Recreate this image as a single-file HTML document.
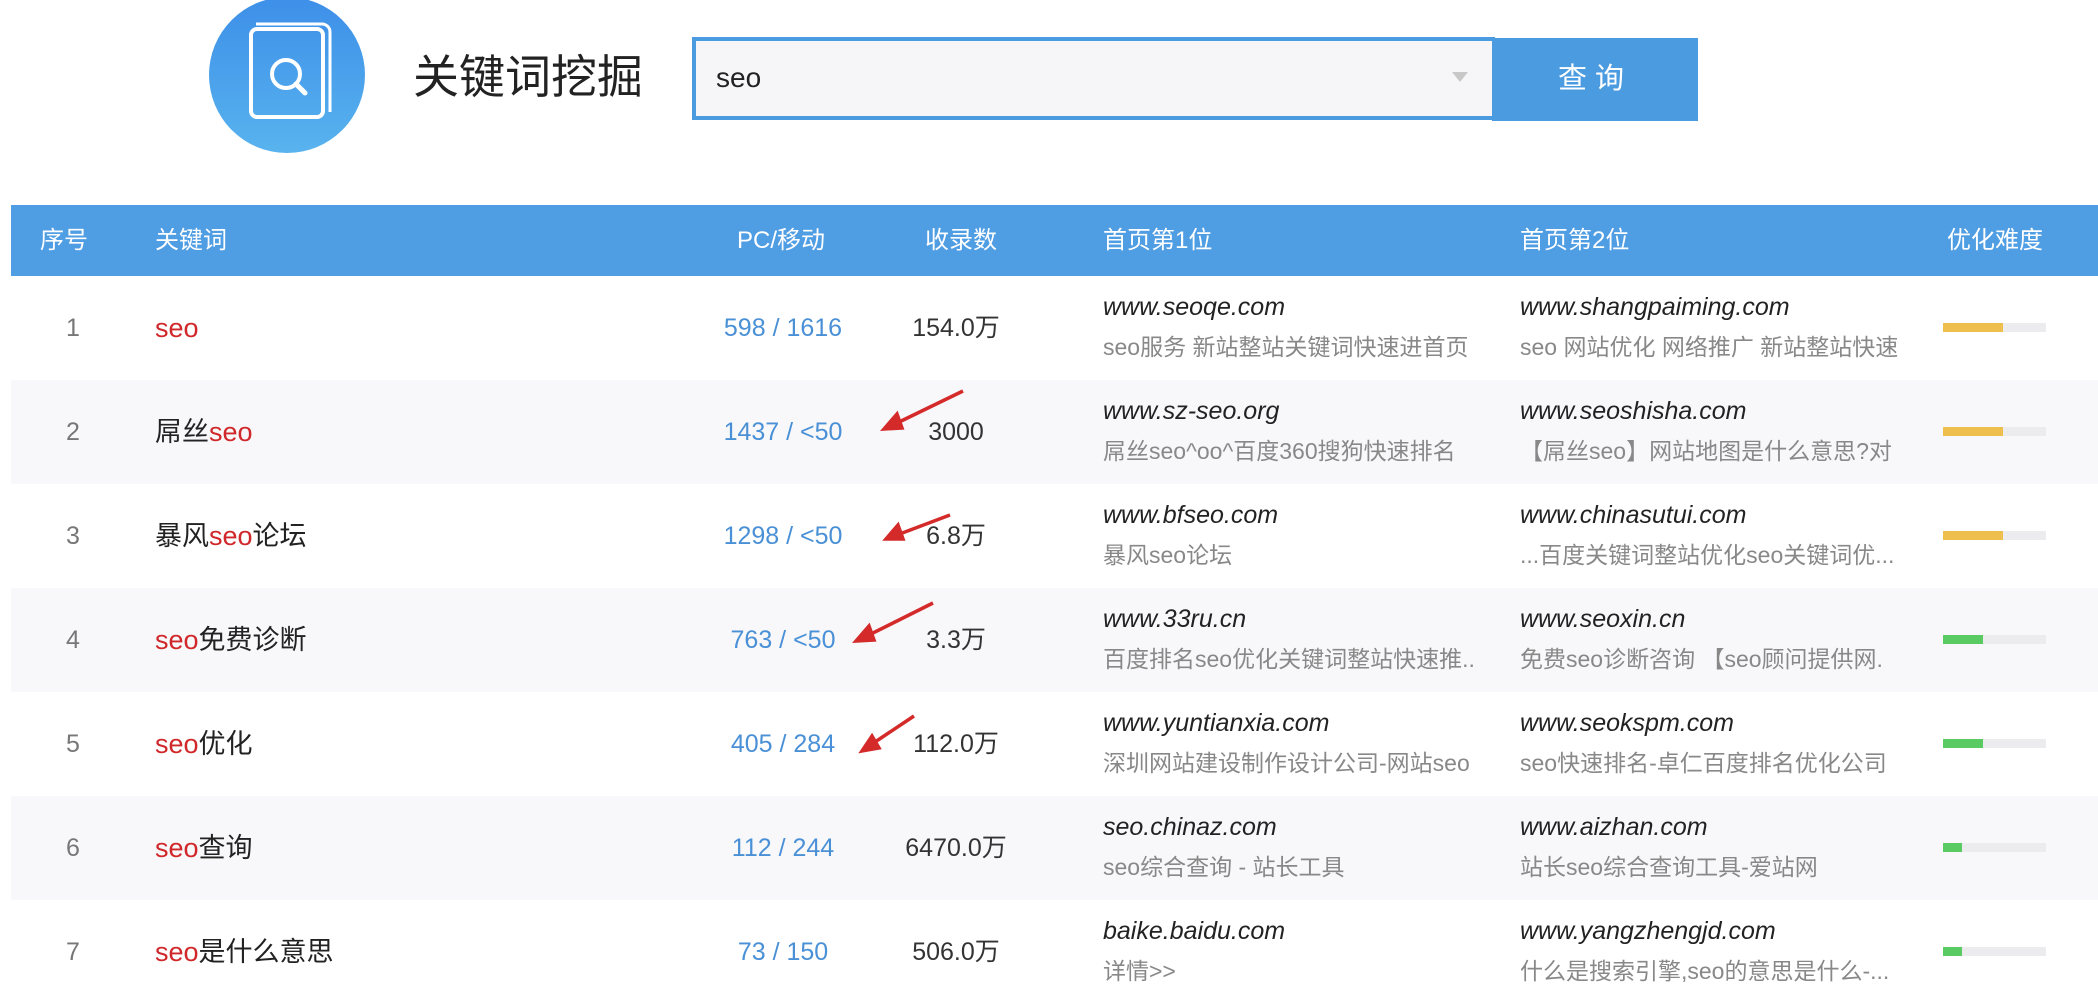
<!DOCTYPE html>
<html><head><meta charset="utf-8"><style>
*{margin:0;padding:0;box-sizing:border-box}
body{width:2098px;height:976px;overflow:hidden;background:#fff;font-family:"Liberation Sans","Noto Sans CJK SC",sans-serif;position:relative}
.abs{position:absolute;white-space:nowrap}
.hdr{position:absolute;left:11px;top:205px;width:2087px;height:71px;background:#4f9de3}
.hdr span{position:absolute;top:0;color:#fff;font-size:24px;line-height:71px}
.row{position:absolute;left:11px;width:2087px;height:104px;overflow:hidden}
.row.alt{background:#f8f8fa}
.row .n,.row .k,.row .p,.row .c{position:absolute;top:0;line-height:104px;height:104px}
.row .n{left:40px;width:44px;text-align:center;font-size:25px;color:#777}
.row .k{left:144px;font-size:27px;color:#222}
.row .k b{font-weight:normal;color:#d0272a}
.row .p{left:672px;width:200px;text-align:center;font-size:25px;color:#4a90d6}
.row .c{left:870px;width:150px;text-align:center;font-size:25px;color:#333}
.row .u{position:absolute;top:14px;line-height:34px;font-size:25px;font-style:italic;color:#222}
.row .d{position:absolute;top:55px;line-height:32px;font-size:23px;color:#888;overflow:hidden;white-space:nowrap}
.bar{position:absolute;left:1932px;top:47px;width:103px;height:9px;background:#ececef}
.bar i{position:absolute;left:0;top:0;height:9px}
</style></head><body>
<svg class="abs" style="left:208px;top:-4px" width="158" height="158" viewBox="0 0 158 158">
<defs><linearGradient id="g" x1="0" y1="0" x2="0" y2="1"><stop offset="0" stop-color="#3d8fe8"/><stop offset="1" stop-color="#58b3ee"/></linearGradient></defs>
<circle cx="79" cy="79" r="78" fill="url(#g)"/>
<rect x="43" y="33" width="72" height="88" rx="6" fill="none" stroke="#fff" stroke-width="4"/>
<path d="M48 28 H114 a8 8 0 0 1 8 8 V116" fill="none" stroke="#fff" stroke-width="3"/>
<circle cx="78" cy="78" r="14" fill="none" stroke="#fff" stroke-width="4"/>
<path d="M88 88 L97 97" stroke="#fff" stroke-width="5" stroke-linecap="round"/>
</svg>
<div class="abs" style="left:413px;top:45px;font-size:46px;color:#222;line-height:64px">关键词挖掘</div>
<div class="abs" style="left:692px;top:37px;width:803px;height:83px;border:4px solid #4a9be0;border-right:none;background:#f6f6f8"></div>
<div class="abs" style="left:716px;top:58px;font-size:28px;color:#222;line-height:40px">seo</div>
<div class="abs" style="left:1452px;top:72px;width:0;height:0;border-left:8px solid transparent;border-right:8px solid transparent;border-top:10px solid #c8c8c8"></div>
<div class="abs" style="left:1492px;top:38px;width:206px;height:83px;background:#4a9be0;color:#fff;font-size:29px;text-align:center;line-height:83px;letter-spacing:8px">查询</div>

<div class="hdr">
<span style="left:29px">序号</span><span style="left:144px">关键词</span><span style="left:726px">PC/移动</span><span style="left:914px">收录数</span><span style="left:1092px">首页第1位</span><span style="left:1509px">首页第2位</span><span style="left:1936px">优化难度</span>
</div>

<div class="row" style="top:276px"><div class="n">1</div><div class="k"><b>seo</b></div><div class="p">598 / 1616</div><div class="c">154.0万</div>
<div class="u" style="left:1092px">www.seoqe.com</div><div class="d" style="left:1092px;width:400px">seo服务 新站整站关键词快速进首页</div>
<div class="u" style="left:1509px">www.shangpaiming.com</div><div class="d" style="left:1509px;width:400px">seo 网站优化 网络推广 新站整站快速</div>
<div class="bar"><i style="width:60px;background:#efbf4e"></i></div></div>

<div class="row alt" style="top:380px"><div class="n">2</div><div class="k">屌丝<b>seo</b></div><div class="p">1437 / &lt;50</div><div class="c">3000</div>
<div class="u" style="left:1092px">www.sz-seo.org</div><div class="d" style="left:1092px;width:400px">屌丝seo^oo^百度360搜狗快速排名</div>
<div class="u" style="left:1509px">www.seoshisha.com</div><div class="d" style="left:1509px;width:400px">【屌丝seo】网站地图是什么意思?对</div>
<div class="bar"><i style="width:60px;background:#efbf4e"></i></div></div>

<div class="row" style="top:484px"><div class="n">3</div><div class="k">暴风<b>seo</b>论坛</div><div class="p">1298 / &lt;50</div><div class="c">6.8万</div>
<div class="u" style="left:1092px">www.bfseo.com</div><div class="d" style="left:1092px;width:400px">暴风seo论坛</div>
<div class="u" style="left:1509px">www.chinasutui.com</div><div class="d" style="left:1509px;width:400px">...百度关键词整站优化seo关键词优...</div>
<div class="bar"><i style="width:60px;background:#efbf4e"></i></div></div>

<div class="row alt" style="top:588px"><div class="n">4</div><div class="k"><b>seo</b>免费诊断</div><div class="p">763 / &lt;50</div><div class="c">3.3万</div>
<div class="u" style="left:1092px">www.33ru.cn</div><div class="d" style="left:1092px;width:400px">百度排名seo优化关键词整站快速推..</div>
<div class="u" style="left:1509px">www.seoxin.cn</div><div class="d" style="left:1509px;width:400px">免费seo诊断咨询 【seo顾问提供网.</div>
<div class="bar"><i style="width:40px;background:#5acb63"></i></div></div>

<div class="row" style="top:692px"><div class="n">5</div><div class="k"><b>seo</b>优化</div><div class="p">405 / 284</div><div class="c">112.0万</div>
<div class="u" style="left:1092px">www.yuntianxia.com</div><div class="d" style="left:1092px;width:400px">深圳网站建设制作设计公司-网站seo</div>
<div class="u" style="left:1509px">www.seokspm.com</div><div class="d" style="left:1509px;width:400px">seo快速排名-卓仁百度排名优化公司</div>
<div class="bar"><i style="width:40px;background:#5acb63"></i></div></div>

<div class="row alt" style="top:796px"><div class="n">6</div><div class="k"><b>seo</b>查询</div><div class="p">112 / 244</div><div class="c">6470.0万</div>
<div class="u" style="left:1092px">seo.chinaz.com</div><div class="d" style="left:1092px;width:400px">seo综合查询 - 站长工具</div>
<div class="u" style="left:1509px">www.aizhan.com</div><div class="d" style="left:1509px;width:400px">站长seo综合查询工具-爱站网</div>
<div class="bar"><i style="width:19px;background:#5acb63"></i></div></div>

<div class="row" style="top:900px"><div class="n">7</div><div class="k"><b>seo</b>是什么意思</div><div class="p">73 / 150</div><div class="c">506.0万</div>
<div class="u" style="left:1092px">baike.baidu.com</div><div class="d" style="left:1092px;width:400px">详情&gt;&gt;</div>
<div class="u" style="left:1509px">www.yangzhengjd.com</div><div class="d" style="left:1509px;width:400px">什么是搜索引擎,seo的意思是什么-...</div>
<div class="bar"><i style="width:19px;background:#5acb63"></i></div></div>

<svg class="abs" style="left:0;top:0" width="2098" height="976">
<g stroke="#d42a2a" stroke-width="3.5" fill="#d42a2a">
<line x1="963" y1="391" x2="895" y2="424"/><polygon points="884,429 897,414 902,428"/>
<line x1="950" y1="515" x2="897" y2="535"/><polygon points="886,539 898,525 903,539"/>
<line x1="933" y1="603" x2="867" y2="636"/><polygon points="856,641 869,626 874,640"/>
<line x1="914" y1="716" x2="872" y2="744"/><polygon points="862,751 872,736 879,748"/>
</g></svg>
</body></html>
